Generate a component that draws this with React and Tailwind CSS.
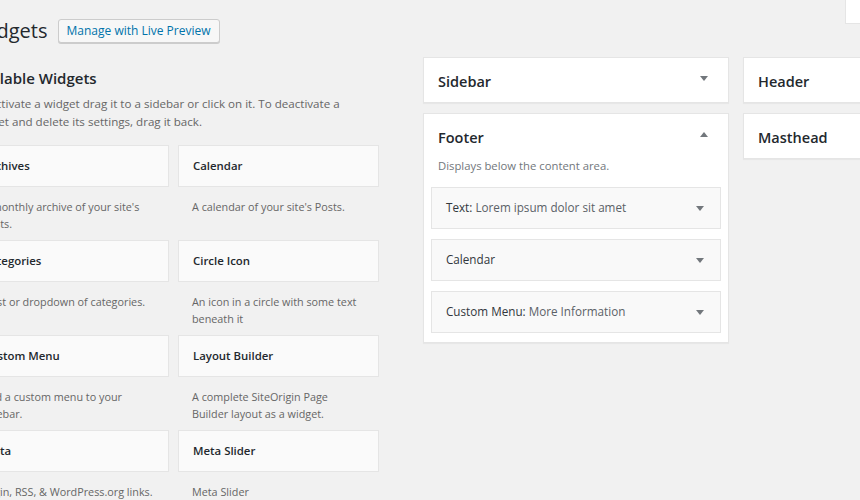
const widgets = [
  { name: 'Archives', desc: "A monthly archive of your site's Posts." },
  { name: 'Calendar', desc: "A calendar of your site's Posts." },
  { name: 'Categories', desc: 'A list or dropdown of categories.' },
  { name: 'Circle Icon', desc: 'An icon in a circle with some text beneath it' },
  { name: 'Custom Menu', desc: 'Add a custom menu to your sidebar.' },
  { name: 'Layout Builder', desc: 'A complete SiteOrigin Page Builder layout as a widget.' },
  { name: 'Meta', desc: 'Login, RSS, & WordPress.org links.' },
  { name: 'Meta Slider', desc: 'Meta Slider' },
];

const footerWidgets = [
  { name: 'Text', title: 'Lorem ipsum dolor sit amet' },
  { name: 'Calendar' },
  { name: 'Custom Menu', title: 'More Information' },
];

function Arrow({ up }) {
  return (
    <svg width="8" height="5" viewBox="0 0 8 5" className="shrink-0">
      <polygon points={up ? '0,5 8,5 4,0' : '0,0 8,0 4,5'} fill="#72777c" />
    </svg>
  );
}

function Panel({ title, up, arrow, children }) {
  return (
    <div className="bg-white border border-[#e5e5e5] shadow-[0_1px_1px_rgba(0,0,0,0.04)]">
      <div className="flex h-[44px] items-start justify-between pl-[14px] pr-[20px] pt-[14px]">
        <h2 className="text-[14.5px] font-semibold leading-[20px] text-[#23282d]">{title}</h2>
        {arrow && (
          <div className="pt-[4px]">
            <Arrow up={up} />
          </div>
        )}
      </div>
      {children}
    </div>
  );
}

export default function App() {
  return (
    <div className="relative h-[500px] w-[860px] overflow-hidden bg-[#f1f1f1] font-['Open_Sans','Noto_Sans',sans-serif] text-[#23282d]">
      {/* screen options tab */}
      <div className="absolute right-0 top-0 h-[24px] w-[15px] border-b border-l border-[#e5e5e5] bg-white" />

      <div className="-ml-[27px] flex items-center pt-[19px]">
        <h1 className="text-[20px] font-normal leading-[24px] text-[#23282d]">Widgets</h1>
        <button className="ml-[10px] h-[24px] rounded-[3px] border border-[#cccccc] bg-[#f7f7f7] px-[8px] text-[12px] leading-[22px] text-[#0073aa] shadow-[0_1px_0_#cccccc]">
          Manage with Live Preview
        </button>
      </div>

      <div className="-ml-[32px] mt-[14px] flex items-start">
        {/* available widgets */}
        <div className="w-[411px] shrink-0">
          <h2 className="mt-[11px] pl-[1px] text-[15px] font-semibold leading-[20px]">Available Widgets</h2>
          <p className="mt-[7px] w-[400px] pl-[5px] text-[11.6px] leading-[18px] text-[#666]">
            To activate a widget drag it to a sidebar or click on it. To deactivate a widget and delete its settings, drag it back.
          </p>
          <div className="mt-[14px] grid grid-cols-2 gap-x-[9px]">
            {widgets.map((w) => (
              <div key={w.name}>
                <div className="flex h-[42px] items-center border border-[#e5e5e5] bg-[#fafafa] px-[14px] text-[11.4px] font-semibold text-[#23282d]">
                  {w.name}
                </div>
                <p className="min-h-[53px] pb-[8px] pl-[14px] pr-[13px] pt-[11px] text-[10.8px] leading-[17px] text-[#666]">
                  {w.desc}
                </p>
              </div>
            ))}
          </div>
        </div>

        {/* sidebars */}
        <div className="ml-[44px] flex w-[306px] shrink-0 flex-col gap-[10px]">
          <Panel title="Sidebar" arrow />
          <Panel title="Footer" arrow up>
            <p className="-mt-[1px] pl-[14px] text-[11.3px] leading-[18px] text-[#72777c]">Displays below the content area.</p>
            <div className="flex flex-col gap-[10px] px-[7px] pb-[9px] pt-[12px]">
              {footerWidgets.map((w) => (
                <div
                  key={w.name}
                  className="flex h-[42px] items-center justify-between border border-[#e5e5e5] bg-[#f9f9f9] pl-[14px] pr-[16px] text-[11.7px] font-medium"
                >
                  <span className="text-[#32373c]">
                    {w.name}
                    {w.title && (
                      <>
                        : <span className="font-normal text-[#5b6167]">{w.title}</span>
                      </>
                    )}
                  </span>
                  <Arrow />
                </div>
              ))}
            </div>
          </Panel>
        </div>

        <div className="ml-[14px] flex w-[306px] shrink-0 flex-col gap-[10px]">
          <Panel title="Header" />
          <Panel title="Masthead" />
        </div>
      </div>
    </div>
  );
}
